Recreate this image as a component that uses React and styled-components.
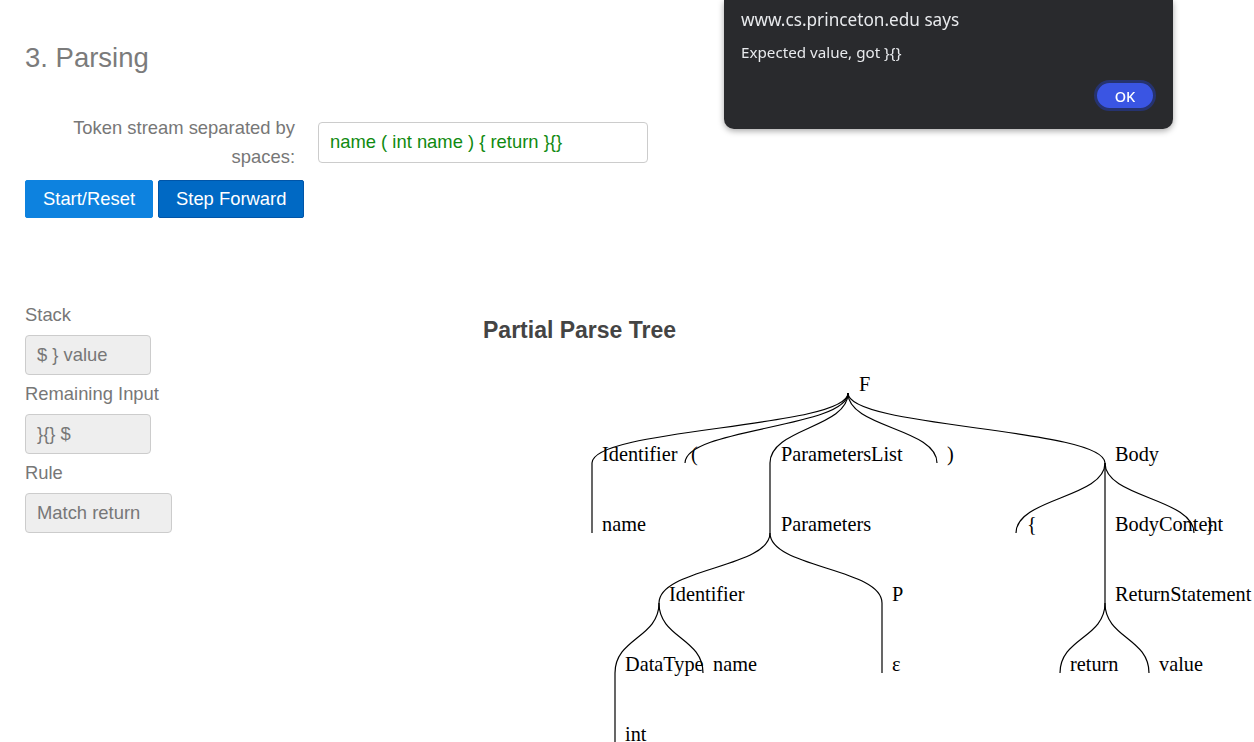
import React from 'react';
import styled, { createGlobalStyle } from 'styled-components';

const GlobalStyle = createGlobalStyle`
  html, body {
    margin: 0;
    padding: 0;
    background: #fff;
    overflow: hidden;
  }
  body {
    font-family: "Liberation Sans", Arial, sans-serif;
  }
`;

const Page = styled.div`
  padding: 0 25px;
  width: 1254px;
  height: 742px;
  box-sizing: border-box;
  overflow: hidden;
`;

const Title = styled.h3`
  margin: 42px 0 0;
  font-size: 27.5px;
  line-height: 32px;
  font-weight: normal;
  color: #7b7b7b;
`;

const FormRow = styled.div`
  display: flex;
  align-items: center;
  margin-top: 39px;
`;

const FieldLabel = styled.label`
  width: 270px;
  margin-right: 23px;
  text-align: right;
  font-size: 18.4px;
  line-height: 29px;
  color: #777;
`;

const TokenInput = styled.input`
  width: 330px;
  height: 41px;
  box-sizing: border-box;
  padding: 0 11px;
  border: 1px solid #ccc;
  border-radius: 4px;
  font-family: "Liberation Sans", Arial, sans-serif;
  font-size: 18.4px;
  color: #108a10;
  outline: none;
`;

const ButtonRow = styled.div`
  display: flex;
  gap: 5px;
  margin-top: 9px;
`;

const Button = styled.button`
  height: 38px;
  padding: 0 17px;
  border: 1px solid ${p => (p.$active ? '#0055a8' : '#0d82df')};
  border-radius: 2px;
  background: ${p => (p.$active ? '#0069c4' : '#0d82df')};
  color: #fff;
  font-family: "Liberation Sans", Arial, sans-serif;
  font-size: 18.4px;
  cursor: pointer;
`;

const ParseSection = styled.div`
  display: flex;
  margin-top: 83px;
`;

const StateColumn = styled.div`
  width: 458px;
  flex-shrink: 0;
`;

const StateLabel = styled.div`
  font-size: 18.4px;
  line-height: 28px;
  color: #777;
  margin-bottom: 6px;
`;

const StateBox = styled.div`
  width: ${p => p.$width}px;
  height: 40px;
  box-sizing: border-box;
  padding-left: 11px;
  margin-bottom: 5px;
  background: #eee;
  border: 1px solid #ccc;
  border-radius: 4px;
  font-size: 18.4px;
  line-height: 38px;
  color: #777;
`;

const TreeColumn = styled.div`
  flex: 1;
`;

const TreeTitle = styled.h4`
  margin: 16px 0 0;
  font-size: 23px;
  line-height: 27px;
  font-weight: bold;
  color: #444;
`;

const TreeSvg = styled.svg`
  display: block;
  margin-top: 6px;
  font-family: "Liberation Serif", "Times New Roman", serif;
  font-size: 20.3px;
`;

const Dialog = styled.div`
  position: fixed;
  top: 0;
  left: 724px;
  width: 449px;
  box-sizing: border-box;
  padding: 8px 17px 18px;
  background: #292a2d;
  border-radius: 0 0 10px 10px;
  box-shadow: 0 2px 6px rgba(0, 0, 0, 0.35);
  font-family: "Noto Sans", "Open Sans", sans-serif;
  color: #e8eaed;
`;

const DialogTitle = styled.div`
  font-size: 17.2px;
  line-height: 24px;
`;

const DialogText = styled.div`
  margin-top: 9px;
  font-size: 15.2px;
  line-height: 22px;
`;

const DialogActions = styled.div`
  display: flex;
  justify-content: flex-end;
  margin-top: 17px;
`;

const OkButton = styled.button`
  width: 62px;
  height: 31px;
  box-sizing: border-box;
  border: 3px solid #26336f;
  border-radius: 16px;
  background: #3a55e3;
  color: #fff;
  font-family: "Noto Sans", "Open Sans", sans-serif;
  font-size: 14.5px;
  font-weight: 500;
`;

// page coordinates of the tree (node x, label x); levels are 70px apart
const tree = {
  label: 'F', x: 848, lx: 859,
  children: [
    { label: 'Identifier', x: 592, lx: 602, children: [
      { label: 'name', x: 592, lx: 602 },
    ] },
    { label: '(', x: 685, lx: 691 },
    { label: 'ParametersList', x: 770, lx: 781, children: [
      { label: 'Parameters', x: 770, lx: 781, children: [
        { label: 'Identifier', x: 659, lx: 669, children: [
          { label: 'DataType', x: 615, lx: 625, children: [
            { label: 'int', x: 615, lx: 625 },
          ] },
          { label: 'name', x: 703, lx: 713 },
        ] },
        { label: 'P', x: 882, lx: 892, children: [
          { label: 'ε', x: 882, lx: 892 },
        ] },
      ] },
    ] },
    { label: ')', x: 937, lx: 947 },
    { label: 'Body', x: 1105, lx: 1115, children: [
      { label: '{', x: 1016, lx: 1027 },
      { label: 'BodyContent', x: 1105, lx: 1115, children: [
        { label: 'ReturnStatement', x: 1105, lx: 1115, children: [
          { label: 'return', x: 1060, lx: 1070 },
          { label: 'value', x: 1149, lx: 1159 },
        ] },
      ] },
      { label: '}', x: 1194, lx: 1205 },
    ] },
  ],
};

const TOP = 393;
const STEP = 70;

function collect(node, depth, links, labels) {
  const y = TOP + depth * STEP;
  labels.push({ text: node.label, x: node.lx, y: y - 2 });
  (node.children || []).forEach(child => {
    const cy = y + STEP;
    const my = (y + cy) / 2;
    links.push(`M${node.x},${y} C${node.x},${my} ${child.x},${my} ${child.x},${cy}`);
    collect(child, depth + 1, links, labels);
  });
}

function ParseTree() {
  const links = [];
  const labels = [];
  collect(tree, 0, links, labels);
  return (
    <TreeSvg width="771" height="392" viewBox="483 350 771 392">
      {links.map((d, i) => (
        <path key={i} d={d} fill="none" stroke="#000" strokeWidth="1.2" />
      ))}
      {labels.map((l, i) => (
        <text key={i} x={l.x} y={l.y} fill="#000">{l.text}</text>
      ))}
    </TreeSvg>
  );
}

export default function App() {
  return (
    <>
      <GlobalStyle />
      <Page>
        <Title>3. Parsing</Title>
        <FormRow>
          <FieldLabel htmlFor="tokens">Token stream separated by spaces:</FieldLabel>
          <TokenInput id="tokens" defaultValue="name ( int name ) { return }{}" />
        </FormRow>
        <ButtonRow>
          <Button>Start/Reset</Button>
          <Button $active>Step Forward</Button>
        </ButtonRow>
        <ParseSection>
          <StateColumn>
            <StateLabel>Stack</StateLabel>
            <StateBox $width={126}>$ } value</StateBox>
            <StateLabel>Remaining Input</StateLabel>
            <StateBox $width={126}>{'}{} $'}</StateBox>
            <StateLabel>Rule</StateLabel>
            <StateBox $width={147}>Match return</StateBox>
          </StateColumn>
          <TreeColumn>
            <TreeTitle>Partial Parse Tree</TreeTitle>
            <ParseTree />
          </TreeColumn>
        </ParseSection>
      </Page>
      <Dialog>
        <DialogTitle>www.cs.princeton.edu says</DialogTitle>
        <DialogText>{'Expected value, got }{}'}</DialogText>
        <DialogActions>
          <OkButton>OK</OkButton>
        </DialogActions>
      </Dialog>
    </>
  );
}
